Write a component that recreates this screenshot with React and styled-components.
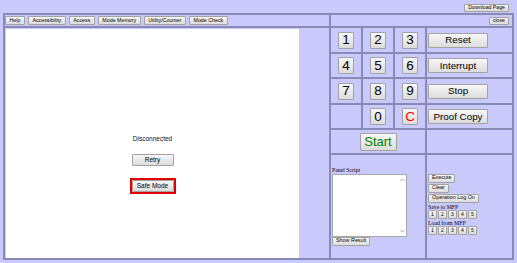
import React from "react";
import styled, { createGlobalStyle } from "styled-components";

const GlobalStyle = createGlobalStyle`
  html, body {
    margin: 0;
    padding: 0;
    background: #c9c9fb;
  }
  body {
    font-family: "Liberation Sans", Arial, sans-serif;
  }
`;

const tabs = ["Help", "Accessibility", "Access", "Mode Memory", "Utility/Counter", "Mode Check"];
const keys = [
  ["1", "2", "3", "Reset"],
  ["4", "5", "6", "Interrupt"],
  ["7", "8", "9", "Stop"],
  ["", "0", "C", "Proof Copy"],
];
const slots = ["1", "2", "3", "4", "5"];

export default function App() {
  return (
    <Page>
      <GlobalStyle />
      <TopBar>
        <SmallBtn>Download Page</SmallBtn>
      </TopBar>
      <Frame>
        <LeftCol>
          <TabRow>
            {tabs.map((t) => (
              <Tab key={t}>{t}</Tab>
            ))}
          </TabRow>
          <ContentCell>
            <Screen>
              <Status>Disconnected</Status>
              <PanelBtn>Retry</PanelBtn>
              <Focus>
                <PanelBtn>Safe Mode</PanelBtn>
              </Focus>
            </Screen>
          </ContentCell>
        </LeftCol>
        <RightCol>
          <CloseRow>
            <SmallBtn>close</SmallBtn>
          </CloseRow>
          <Keypad>
            {keys.map((row, i) =>
              row.map((k, j) =>
                j < 3 ? (
                  <KeyCell key={i + "-" + j}>
                    {k && <Key $red={k === "C"}>{k}</Key>}
                  </KeyCell>
                ) : (
                  <ActionCell key={i + "-" + j}>
                    <ActionBtn>{k}</ActionBtn>
                  </ActionCell>
                )
              )
            )}
            <StartCell>
              <StartBtn>Start</StartBtn>
            </StartCell>
            <Cell />
            <ScriptCell>
              <Label>Panel Script</Label>
              <ScriptBox>
                <ScriptArea />
                <Track>
                  <svg width="5" height="4" viewBox="0 0 5 4">
                    <path d="M0.5 3 L2.5 1 L4.5 3" fill="none" stroke="#999" strokeWidth="0.8" />
                  </svg>
                  <svg width="5" height="4" viewBox="0 0 5 4">
                    <path d="M0.5 1 L2.5 3 L4.5 1" fill="none" stroke="#999" strokeWidth="0.8" />
                  </svg>
                </Track>
              </ScriptBox>
              <MiniBtn>Show Result</MiniBtn>
            </ScriptCell>
            <MfpCell>
              <MiniBtn>Execute</MiniBtn>
              <MiniBtn>Clear</MiniBtn>
              <MiniBtn>Operation Log On</MiniBtn>
              <Label>Save to MFP</Label>
              <SlotRow>
                {slots.map((s) => (
                  <SlotBtn key={s}>{s}</SlotBtn>
                ))}
              </SlotRow>
              <Label>Load from MFP</Label>
              <SlotRow>
                {slots.map((s) => (
                  <SlotBtn key={s}>{s}</SlotBtn>
                ))}
              </SlotRow>
            </MfpCell>
          </Keypad>
        </RightCol>
      </Frame>
    </Page>
  );
}

const Page = styled.div`
  width: 517px;
  height: 263px;
  box-sizing: border-box;
  padding: 4px 3px 0 3px;
  display: flex;
  flex-direction: column;
`;

const TopBar = styled.div`
  height: 9px;
  display: flex;
  justify-content: flex-end;
  align-items: flex-start;
  padding-right: 5px;
`;

const Btn = styled.button`
  font-family: "Liberation Sans", Arial, sans-serif;
  background: linear-gradient(#f7f7f7, #dcdcdc);
  border: 1px solid #a2a2a2;
  border-radius: 1px;
  padding: 0;
  margin: 0;
  color: #000;
  line-height: 1;
  display: flex;
  align-items: center;
  justify-content: center;
  box-sizing: border-box;
  white-space: nowrap;
`;

const SmallBtn = styled(Btn)`
  height: 8px;
  font-size: 5.2px;
  padding: 0 3px;
`;

const Frame = styled.div`
  display: grid;
  grid-template-columns: 326px 183px;
  height: 245px;
  border: 1px solid #8a8ab6;
`;

const Cell = styled.div`
  border: 1px solid #8a8ab6;
  box-sizing: border-box;
`;

const LeftCol = styled.div`
  display: flex;
  flex-direction: column;
`;

const TabRow = styled(Cell)`
  height: 13px;
  display: flex;
  align-items: center;
  gap: 3px;
  padding-left: 0;
`;

const Tab = styled(Btn)`
  height: 9px;
  font-size: 5.3px;
  padding: 0 3.5px;
`;

const ContentCell = styled(Cell)`
  flex: 1;
  display: flex;
  padding: 1px 0 0 1px;
`;

const Screen = styled.div`
  width: 293px;
  background: #fff;
  display: flex;
  flex-direction: column;
  align-items: center;
  padding-top: 106px;
  box-sizing: border-box;
`;

const Status = styled.div`
  font-size: 6.5px;
  color: #111;
  margin-bottom: 12px;
`;

const PanelBtn = styled(Btn)`
  width: 42px;
  height: 12px;
  font-size: 6.5px;
`;

const Focus = styled.div`
  margin-top: 12px;
  border: 2px solid #e00000;
`;

const RightCol = styled.div`
  display: flex;
  flex-direction: column;
`;

const CloseRow = styled(Cell)`
  height: 13px;
  display: flex;
  align-items: center;
  justify-content: flex-end;
  padding-right: 3px;
`;

const Keypad = styled.div`
  flex: 1;
  display: grid;
  grid-template-columns: 32px 32px 32px 87px;
  grid-template-rows: 26px 25px 26px 25px 25px 1fr;
`;

const KeyCell = styled(Cell)`
  display: flex;
  align-items: center;
  justify-content: center;
`;

const Key = styled(Btn)`
  width: 16px;
  height: 17px;
  font-size: 13.5px;
  color: ${(p) => (p.$red ? "#ff0000" : "#000")};
`;

const ActionCell = styled(Cell)`
  display: flex;
  align-items: center;
  padding-left: 1px;
`;

const ActionBtn = styled(Btn)`
  width: 60px;
  height: 15px;
  font-size: 9.8px;
`;

const StartCell = styled(Cell)`
  grid-column: span 3;
  display: flex;
  align-items: center;
  justify-content: center;
`;

const StartBtn = styled(Btn)`
  width: 37px;
  height: 18px;
  font-size: 13px;
  color: #008000;
`;

const ScriptCell = styled(Cell)`
  grid-column: span 3;
  display: flex;
  flex-direction: column;
  justify-content: center;
  align-items: flex-start;
  padding: 0 1px 0 1px;
`;

const Label = styled.div`
  font-family: "Liberation Serif", "Times New Roman", serif;
  font-size: 5.8px;
  line-height: 6px;
  color: #000;
`;

const ScriptBox = styled.div`
  width: 75px;
  height: 63px;
  margin-top: 1px;
  background: #fff;
  border: 1px solid #a8a8a8;
  box-sizing: border-box;
  display: flex;
`;

const ScriptArea = styled.textarea`
  flex: 1;
  border: 0;
  outline: 0;
  resize: none;
  padding: 0;
  background: transparent;
`;

const Track = styled.div`
  width: 8px;
  display: flex;
  flex-direction: column;
  justify-content: space-between;
  align-items: center;
  padding: 3px 0;
`;

const MiniBtn = styled(Btn)`
  height: 9px;
  font-size: 5.4px;
  padding: 0 3px;
  margin-bottom: 1px;
`;

const MfpCell = styled(Cell)`
  display: flex;
  flex-direction: column;
  justify-content: center;
  align-items: flex-start;
  padding: 0 1px 4px 1px;
`;

const SlotRow = styled.div`
  display: flex;
  gap: 1px;
  margin-bottom: 1px;
`;

const SlotBtn = styled(Btn)`
  width: 9px;
  height: 9px;
  font-size: 5px;
`;
